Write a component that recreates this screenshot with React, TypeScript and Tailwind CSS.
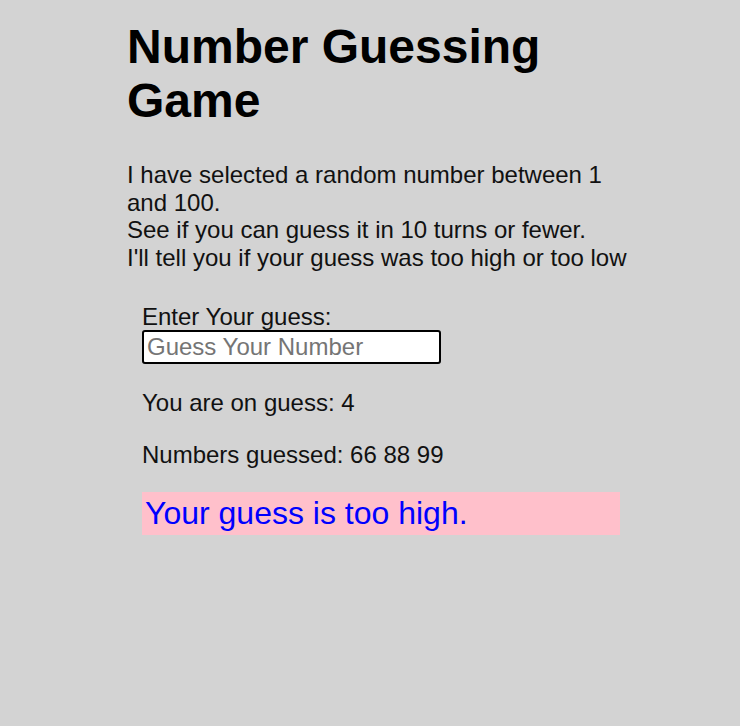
export default function App() {
  return (
    <div className="min-h-[726px] bg-[#d3d3d3] font-['Liberation_Sans',Arial,sans-serif] text-black">
      <div className="ml-[127px] w-[500px] pt-[20px]">
        <h1 className="text-[48px] font-bold leading-[54px]">Number Guessing Game</h1>
        <p className="mt-[33px] text-[24px] leading-[27.6px] text-[#111]">
          I have selected a random number between 1 and 100.
          <br />
          See if you can guess it in 10 turns or fewer.
          <br />
          I'll tell you if your guess was too high or too low
        </p>
        <div className="ml-[15px] mt-[33px] text-[24px] leading-[26px] text-[#111]">
          <label htmlFor="guess" className="block">Enter Your guess:</label>
          <input
            id="guess"
            type="text"
            placeholder="Guess Your Number"
            className="block h-[34px] w-[299px] rounded-[3px] border-2 border-black bg-white px-[3px] text-[24px] placeholder:text-[#757575] outline-none"
          />
          <p className="mt-[26px]">You are on guess: 4</p>
          <p className="mt-[26px]">Numbers guessed: 66 88 99</p>
          <div className="mt-[24px] h-[43px] w-[478px] bg-[pink] pl-[3px] text-[32px] leading-[43px] text-[blue]">
            Your guess is too high.
          </div>
        </div>
      </div>
    </div>
  );
}
